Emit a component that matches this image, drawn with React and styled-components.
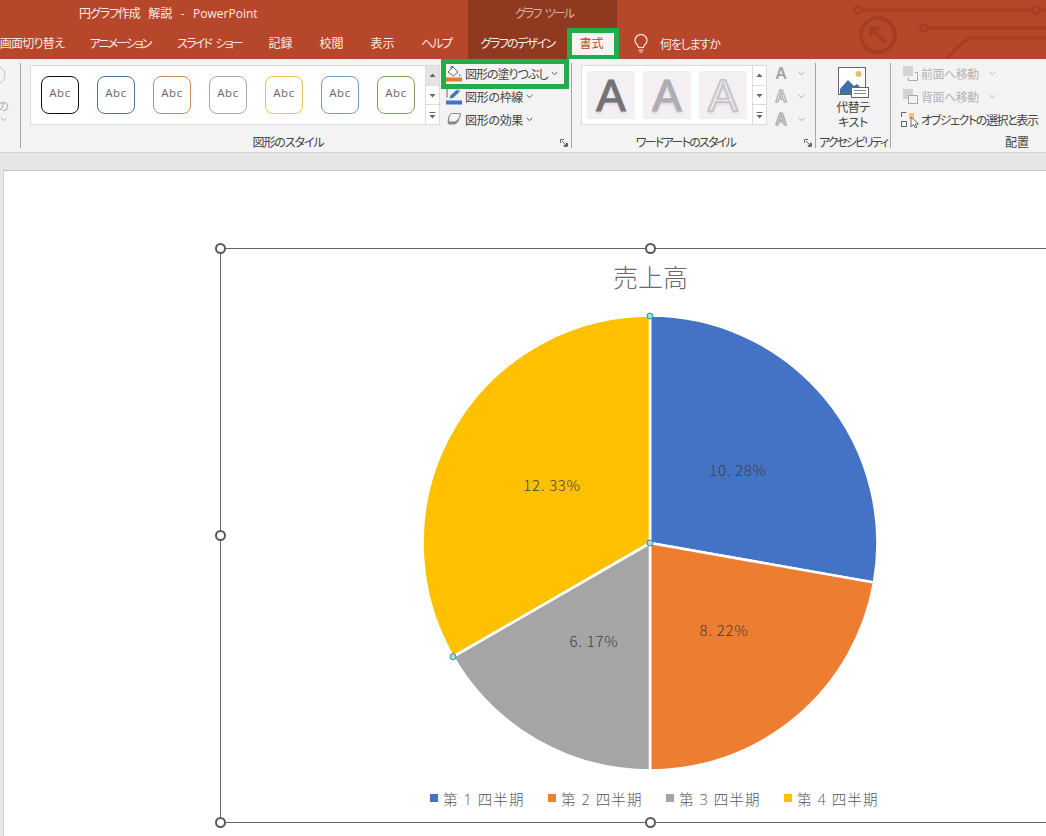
import React from 'react';
import styled, { createGlobalStyle } from 'styled-components';

const GlobalStyle = createGlobalStyle`
  html, body {
    margin: 0;
    height: 836px;
    overflow: hidden;
    background: #e6e6e6;
  }
  body {
    font-family: "Open Sans", "Noto Sans CJK JP", sans-serif;
    font-size: 12px;
    font-feature-settings: "palt";
    color: #444;
  }
`;

const Window = styled.div`
  width: 1046px;
  height: 836px;
  display: flex;
  flex-direction: column;
  overflow: hidden;
`;

/* title bar + tabs */
const TitleBar = styled.div`
  position: relative;
  display: flex;
  height: 59px;
  flex: none;
  background: #b7472a;
  color: #f8e9e4;
`;

const Circuit = styled.svg`
  position: absolute;
  right: 0;
  top: 0;
`;

const TitleColumn = styled.div`
  width: 468px;
  flex: none;
`;

const TitleText = styled.div`
  display: flex;
  gap: 8.5px;
  height: 28px;
  line-height: 28px;
  padding-left: 79px;
  white-space: nowrap;
`;

const Tight = styled.span`
  letter-spacing: ${p => p.$ls}px;
`;

const TabRow = styled.div`
  display: flex;
  height: 31px;
  justify-content: ${p => (p.$end ? 'flex-end' : 'flex-start')};
  padding-right: ${p => (p.$end ? '3px' : '0')};
`;

const Tab = styled.div`
  flex: none;
  width: ${p => p.$w}px;
  line-height: 31px;
  text-align: center;
  white-space: nowrap;
  letter-spacing: ${p => p.$ls || 0}px;
  word-spacing: ${p => p.$ws || 0}px;
`;

const ActiveTab = styled.div`
  position: relative;
  z-index: 1;
  flex: none;
  width: 52px;
  box-sizing: border-box;
  padding-right: 3px;
  border: 5px solid #22ac4c;
  border-bottom-width: 4px;
  background: #f6f3f2;
  color: #b7472a;
  line-height: 22px;
  text-align: center;
`;

const ContextColumn = styled.div`
  width: 149px;
  flex: none;
  background: #8f3a20;
`;

const ContextLabel = styled.div`
  height: 28px;
  padding-left: 3px;
  line-height: 27px;
  text-align: center;
  letter-spacing: -1.9px;
  word-spacing: 3px;
  color: #dcae9d;
`;

const TellMe = styled.div`
  display: flex;
  align-items: center;
  gap: 12px;
  margin-top: 28px;
  height: 31px;
  padding-left: 17px;
  letter-spacing: -1.2px;
`;

/* ribbon */
const Ribbon = styled.div`
  display: flex;
  flex: none;
  height: 89px;
  padding-top: 4px;
  background: #f3f3f3;
  border-bottom: 1px solid #d2d2d2;
`;

const Group = styled.div`
  display: flex;
  flex-direction: column;
  flex: none;
  box-sizing: border-box;
  width: ${p => p.$w}px;
  height: 85px;
  border-right: ${p => (p.$last ? 'none' : '1px solid #a6a6a6')};
`;

const GroupBody = styled.div`
  display: flex;
  flex: 1;
  min-height: 0;
  padding-left: ${p => p.$pad || 0}px;
`;

const GroupFooter = styled.div`
  display: flex;
  align-items: center;
  height: 14px;
  margin-bottom: -2px;
  line-height: 14px;
`;

const GroupLabel = styled.div`
  flex: 1;
  text-align: ${p => p.$align || 'center'};
  padding-right: ${p => p.$pr || 0}px;
  white-space: nowrap;
  letter-spacing: ${p => p.$ls || 0}px;
`;

const Launcher = styled.svg`
  flex: none;
  margin-right: 3px;
`;

const CutOffGroup = styled.div`
  display: flex;
  flex-direction: column;
  align-items: center;
  width: 10px;
  margin-left: -2px;
  padding-top: 2px;
  color: #b0b0b0;
  font-size: 12px;
  line-height: 14px;
`;

const CutOffGlyph = styled.span`
  margin: 15px 0 3px;
`;

const Gallery = styled.div`
  display: flex;
  flex: none;
  align-items: center;
  justify-content: space-between;
  box-sizing: border-box;
  width: ${p => p.$w}px;
  height: 60px;
  margin-top: 2px;
  padding-left: ${p => p.$pad}px;
  background: #fff;
  border: 1px solid #dcdcdc;
  border-right: none;
`;

const ThumbRow = styled.div`
  display: flex;
  gap: ${p => p.$gap}px;
`;

const StyleThumb = styled.div`
  flex: none;
  box-sizing: border-box;
  width: 38px;
  height: 38px;
  padding-top: 8px;
  border: 1.2px solid ${p => p.$color};
  border-radius: 8px;
  font-family: "Open Sans", sans-serif;
  font-size: 11.5px;
  line-height: 16px;
  letter-spacing: 0.5px;
  text-align: center;
  color: #666;
`;

const ArtThumb = styled.div`
  flex: none;
  width: 48px;
  height: 48px;
  background: #f3eff3;
  font-family: "Liberation Sans", sans-serif;
  font-size: 44px;
  line-height: 49px;
  text-align: center;
  color: ${p => p.$fill};
  -webkit-text-stroke: ${p => (p.$outline ? '2px #c8c4ca' : `1.2px ${p.$fill}`)};
  text-shadow: 0 2px 3px rgba(120, 120, 120, 0.25);
`;

const Spinner = styled.div`
  display: flex;
  flex-direction: column;
  flex: none;
  box-sizing: border-box;
  width: 15px;
  height: 60px;
  border: 1px solid #dcdcdc;
  background: #fff;
`;

const SpinCell = styled.div`
  display: flex;
  flex: 1;
  align-items: center;
  justify-content: center;
  background: ${p => (p.$off ? '#e4e4e4' : 'transparent')};
  & + & {
    border-top: 1px solid #dcdcdc;
  }
`;

const CommandList = styled.div`
  display: flex;
  flex-direction: column;
  margin-top: -1px;
  margin-left: ${p => p.$ml || 0}px;
`;

const Command = styled.div`
  position: relative;
  display: flex;
  align-items: center;
  height: 23px;
  gap: ${p => p.$gap ?? 3}px;
  padding-left: ${p => p.$pl ?? 3}px;
  white-space: nowrap;
  color: ${p => (p.$off ? '#b4b4b4' : '#444')};
`;

const CommandText = styled.span`
  letter-spacing: ${p => p.$ls || 0}px;
`;

const ChevronSlot = styled.span`
  display: flex;
  margin-left: ${p => p.$ml || 0}px;
`;

const Callout = styled.div`
  position: absolute;
  left: -2px;
  top: -3px;
  width: 128px;
  height: 30px;
  box-sizing: border-box;
  border: 5px solid #22ac4c;
  pointer-events: none;
`;

const TextStyleList = styled.div`
  display: flex;
  flex-direction: column;
  margin-left: 6px;
  margin-top: -1px;
`;

const TextStyleRow = styled.div`
  display: flex;
  align-items: center;
  gap: 7px;
  height: 23px;
  padding-left: 2px;
`;

const SmallA = styled.span`
  width: 12px;
  font-family: "Liberation Sans", sans-serif;
  font-size: 16px;
  font-weight: 700;
  text-align: center;
  color: ${p => p.$fill};
  -webkit-text-stroke: ${p => (p.$outline ? '1px #a8a8a8' : '0')};
`;

const AltButton = styled.div`
  display: flex;
  flex: 1;
  flex-direction: column;
  align-items: center;
  padding-top: 4px;
  line-height: 14.5px;
  text-align: center;
`;

const AltLabel = styled.div`
  margin-top: 3px;
  letter-spacing: -0.5px;
`;

/* slide area */
const Workspace = styled.div`
  flex: 1;
  min-height: 0;
  padding: 17px 0 0 3px;
  background: #e6e6e6;
`;

const Slide = styled.div`
  height: 100%;
  box-sizing: border-box;
  padding: 77px 0 0 216px;
  background: #fff;
  border-top: 1px solid #c4c4c4;
  border-left: 1px solid #d0d0d0;
`;

const ChartFrame = styled.div`
  position: relative;
  display: flex;
  flex-direction: column;
  align-items: center;
  box-sizing: border-box;
  width: 860px;
  height: 575px;
  border: 1px solid #666;
  border-right: none;
`;

const Handle = styled.div`
  position: absolute;
  left: ${p => p.$x}px;
  top: ${p => p.$y}px;
  width: 11px;
  height: 11px;
  box-sizing: border-box;
  border: 2px solid #595959;
  border-radius: 50%;
  background: #fff;
`;

const ChartTitle = styled.div`
  margin-top: 11px;
  height: 34px;
  font-size: 25px;
  line-height: 34px;
  color: #6a6a6a;
  font-weight: 300;
`;

const Pie = styled.svg`
  display: block;
  flex: none;
  margin-top: 21px;
  margin-left: -1px;
  overflow: visible;
`;

const PieLabel = styled.text`
  font-family: "Noto Sans CJK JP", sans-serif;
  font-size: 15px;
  font-weight: 300;
  fill: #404040;
  text-anchor: middle;
  dominant-baseline: central;
  letter-spacing: 0.7px;
`;

const Legend = styled.div`
  display: flex;
  gap: 23px;
  margin-top: 18px;
  margin-left: 8px;
`;

const LegendItem = styled.div`
  display: flex;
  align-items: center;
  gap: 5px;
  width: 95px;
  height: 18px;
  font-size: 14.5px;
  font-weight: 300;
  letter-spacing: 1.1px;
  white-space: pre;
  color: #595959;
  &::before {
    content: '';
    flex: none;
    width: 8px;
    height: 8px;
    background: ${p => p.$color};
  }
`;

const Chevron = ({ color = '#555', ml }) => (
  <ChevronSlot $ml={ml}>
    <svg width="7" height="5" viewBox="0 0 7 5">
      <path d="M.7 1l2.800 2.600L6.300 1" fill="none" stroke={color} strokeWidth="1" />
    </svg>
  </ChevronSlot>
);

const Caret = ({ kind }) => (
  <svg width="7" height="8" viewBox="0 0 7 8">
    {kind === 'up' && <path d="M.5 6h6L3.500 2.500z" fill="#666" />}
    {kind === 'down' && <path d="M.5 3h6L3.500 6.500z" fill="#666" />}
    {kind === 'more' && <path d="M.5 1h6v1h-6zM.5 4h6L3.500 7.500z" fill="#666" />}
  </svg>
);

const Spin = ({ firstOff }) => (
  <Spinner>
    <SpinCell $off={firstOff}><Caret kind="up" /></SpinCell>
    <SpinCell><Caret kind="down" /></SpinCell>
    <SpinCell><Caret kind="more" /></SpinCell>
  </Spinner>
);

const DialogLauncher = () => (
  <Launcher width="8" height="8" viewBox="0 0 8 8">
    <path d="M.5 4V.5H4M7.500 4v3.500H4M2 2l4.500 4.500M6.500 3.500v3h-3" fill="none" stroke="#666" />
  </Launcher>
);

const BucketIcon = () => (
  <svg width="16" height="17" viewBox="0 0 16 17">
    <path d="M2 7l5-5 5 5-4.500 4z" fill="#fff" stroke="#666" />
    <path d="M5 4V1.500h2V3" fill="none" stroke="#666" />
    <path d="M13.500 8.500c1 1.400 1.400 2 1 2.600-.5.5-1.500.3-1.500-.6z" fill="#888" />
    <rect x="0" y="12.500" width="16" height="4" fill="#e07b39" />
  </svg>
);

const PenIcon = () => (
  <svg width="16" height="17" viewBox="0 0 16 17">
    <path d="M1 .5v9" stroke="#666" fill="none" />
    <path d="M3.500 10.500l1-3L11 1.500l2.500 2.500L7 10z" fill="#3f79b8" />
    <path d="M11 1.500l1.500-1 2.500 2.500-1.500 1z" fill="#9cc2e5" />
    <rect x="0" y="12.500" width="16" height="4" fill="#4472c4" />
  </svg>
);

const EffectIcon = () => (
  <svg width="16" height="15" viewBox="0 0 16 15">
    <path d="M4 2.500h10.500c-.5 4-2 8.500-5.500 10H2.500C1 11 1.500 5 4 2.500z" fill="#8c8c8c" />
    <path d="M5 1.500h9.500c-.5 3.500-2 7-5.500 8.500H3C2 8 3 4 5 1.500z" fill="#f4f4f4" stroke="#777" strokeWidth=".8" />
  </svg>
);

const AltTextIcon = () => (
  <svg width="31" height="31" viewBox="0 0 31 31">
    <rect x=".5" y=".5" width="27" height="27" fill="#fff" stroke="#666" />
    <circle cx="20.500" cy="7" r="3" fill="#e8bd6c" />
    <path d="M2 27V22l8-9 6 6 3-2 7 7v3z" fill="#3f6fa5" />
    <rect x="13.500" y="20.500" width="17" height="10" fill="#fff" stroke="#666" />
    <path d="M16 23.500h12M16 26.500h12" stroke="#888" />
  </svg>
);

const ForwardIcon = ({ back }) => (
  <svg width="15" height="15" viewBox="0 0 15 15">
    <rect x="0" y="0" width="10" height="10" fill="#d4d4d4" />
    {back ? (
      <rect x="5.500" y="6.500" width="9" height="8" fill="#f3f3f3" stroke="#aaa" />
    ) : (
      <path d="M11.500 6.500h3v8h-9v-3" fill="none" stroke="#aaa" />
    )}
  </svg>
);

const SelectionIcon = () => (
  <svg width="18" height="16" viewBox="0 0 18 16">
    <path d="M.5 5V.5h5" fill="none" stroke="#666" />
    <rect x=".5" y="9.500" width="5" height="5" fill="none" stroke="#666" />
    <rect x="8" y="1" width="5" height="6" fill="#f0c090" />
    <path d="M10 5v10l2.500-2.500 2 3.500 1.500-1-2-3h3.500z" fill="#fff" stroke="#666" />
  </svg>
);

const BulbIcon = () => (
  <svg width="14" height="19" viewBox="0 0 14 19">
    <path
      d="M4.500 13.500c0-2.500-3.500-3.500-3.500-7a6 6 0 0 1 12 0c0 3.500-3.500 4.500-3.500 7zM4.500 16h5M5.500 18h3"
      fill="none"
      stroke="#f8e9e4"
      strokeWidth="1.200"
    />
  </svg>
);

const STYLE_BORDERS = ['#111', '#4d7396', '#c98a5c', '#a8a8a8', '#e6c64c', '#6f9cc0', '#77a35c'];

const SLICES = [
  { name: '第 1 四半期', value: 10, label: '10. 28%', color: '#4472c4', lx: 316, ly: 154 },
  { name: '第 2 四半期', value: 8, label: '8. 22%', color: '#ed7d31', lx: 302, ly: 314 },
  { name: '第 3 四半期', value: 6, label: '6. 17%', color: '#a5a5a5', lx: 172, ly: 325 },
  { name: '第 4 四半期', value: 12, label: '12. 33%', color: '#ffc000', lx: 130, ly: 169 },
];

const PIE_C = 228;
const PIE_R = 227.5;
const pointAt = deg => {
  const a = (deg * Math.PI) / 180;
  return [PIE_C + PIE_R * Math.sin(a), PIE_C - PIE_R * Math.cos(a)];
};

const PieChart = () => {
  const total = SLICES.reduce((sum, s) => sum + s.value, 0);
  let start = 0;
  const slices = SLICES.map(s => {
    const end = start + (s.value / total) * 360;
    const [x1, y1] = pointAt(start);
    const [x2, y2] = pointAt(end);
    const large = end - start > 180 ? 1 : 0;
    start = end;
    return { ...s, d: `M${PIE_C} ${PIE_C}L${x1} ${y1}A${PIE_R} ${PIE_R} 0 ${large} 1 ${x2} ${y2}Z` };
  });
  const [gx, gy] = pointAt(240);
  return (
    <Pie width="456" height="456" viewBox="0 0 456 456">
      {slices.map(s => (
        <path key={s.name} d={s.d} fill={s.color} stroke="#fff" strokeWidth="2.6" />
      ))}
      {slices.map(s => (
        <PieLabel key={s.label} x={s.lx} y={s.ly}>{s.label}</PieLabel>
      ))}
      {[[PIE_C, 1], [PIE_C, PIE_C], [gx, gy]].map(([x, y]) => (
        <circle key={`${x}-${y}`} cx={x} cy={y} r="3" fill="#a8dde0" stroke="#2f8ea6" />
      ))}
    </Pie>
  );
};

const App = () => (
  <Window>
    <GlobalStyle />
    <TitleBar>
      <Circuit width="200" height="59" viewBox="0 0 200 59">
        <g fill="none" stroke="#a53f22" strokeWidth="3">
          <circle cx="12" cy="10" r="3.500" />
          <circle cx="190" cy="10" r="3.500" />
          <path d="M15 10h172M193 10h7" />
          <circle cx="32" cy="35" r="17" strokeWidth="4" />
          <path d="M25 28l15 15M25 37v-9h9" strokeWidth="4" />
          <circle cx="78" cy="28" r="3.500" />
          <path d="M82 28h118M100 59l22-21h78" />
        </g>
      </Circuit>
      <TitleColumn>
        <TitleText>
          <Tight $ls={-1.1}>円グラフ作成</Tight>
          <span>解説</span>
          <span>-</span>
          <span>PowerPoint</span>
        </TitleText>
        <TabRow $end>
          <Tab $w={88} $ls={-0.7}>画面切り替え</Tab>
          <Tab $w={88} $ls={-2}>アニメーション</Tab>
          <Tab $w={91} $ls={-1.8} $ws={3}>スライド ショー</Tab>
          <Tab $w={51}>記録</Tab>
          <Tab $w={51}>校閲</Tab>
          <Tab $w={51}>表示</Tab>
          <Tab $w={57} $ls={-1.3}>ヘルプ</Tab>
        </TabRow>
      </TitleColumn>
      <ContextColumn>
        <ContextLabel>グラフ ツール</ContextLabel>
        <TabRow>
          <Tab $w={99} $ls={-1.6}>グラフのデザイン</Tab>
          <ActiveTab>書式</ActiveTab>
        </TabRow>
      </ContextColumn>
      <TellMe>
        <BulbIcon />
        何をしますか
      </TellMe>
    </TitleBar>

    <Ribbon>
      <Group $w={21}>
        <GroupBody>
          <CutOffGroup>
            <svg width="10" height="20" viewBox="0 0 10 20">
              <circle cx="-2" cy="10" r="9" fill="none" stroke="#c6c6c6" />
            </svg>
            <CutOffGlyph>の</CutOffGlyph>
            <Chevron color="#b0b0b0" />
          </CutOffGroup>
        </GroupBody>
      </Group>

      <Group $w={551}>
        <GroupBody $pad={9}>
          <Gallery $w={410} $pad={10}>
            <ThumbRow $gap={18}>
              {STYLE_BORDERS.map(color => (
                <StyleThumb key={color} $color={color}>Abc</StyleThumb>
              ))}
            </ThumbRow>
            <Spin firstOff />
          </Gallery>
          <CommandList $ml={3}>
            <Command>
              <BucketIcon />
              <CommandText $ls={-1}>図形の塗りつぶし</CommandText>
              <Chevron />
              <Callout />
            </Command>
            <Command>
              <PenIcon />
              <CommandText $ls={-0.3}>図形の枠線</CommandText>
              <Chevron />
            </Command>
            <Command>
              <EffectIcon />
              <CommandText $ls={-0.3}>図形の効果</CommandText>
              <Chevron />
            </Command>
          </CommandList>
        </GroupBody>
        <GroupFooter>
          <GroupLabel $pr={5} $ls={-1.1}>図形のスタイル</GroupLabel>
          <DialogLauncher />
        </GroupFooter>
      </Group>

      <Group $w={244}>
        <GroupBody $pad={9}>
          <Gallery $w={186} $pad={5}>
            <ThumbRow $gap={8}>
              <ArtThumb $fill="#737377">A</ArtThumb>
              <ArtThumb $fill="#adadb2">A</ArtThumb>
              <ArtThumb $fill="#ececf0" $outline>A</ArtThumb>
            </ThumbRow>
            <Spin />
          </Gallery>
          <TextStyleList>
            <TextStyleRow>
              <SmallA $fill="#a4a4a4">A</SmallA>
              <Chevron color="#aaa" ml={4} />
            </TextStyleRow>
            <TextStyleRow>
              <SmallA $fill="#f0f0f0" $outline>A</SmallA>
              <Chevron color="#aaa" ml={4} />
            </TextStyleRow>
            <TextStyleRow>
              <SmallA $fill="#d4d4d4" $outline>A</SmallA>
              <Chevron color="#aaa" ml={4} />
            </TextStyleRow>
          </TextStyleList>
        </GroupBody>
        <GroupFooter>
          <GroupLabel $pr={5} $ls={-1.7}>ワードアートのスタイル</GroupLabel>
          <DialogLauncher />
        </GroupFooter>
      </Group>

      <Group $w={75}>
        <GroupBody>
          <AltButton>
            <AltTextIcon />
            <AltLabel>代替テ<br />キスト</AltLabel>
          </AltButton>
        </GroupBody>
        <GroupFooter>
          <GroupLabel $ls={-2}>アクセシビリティ</GroupLabel>
        </GroupFooter>
      </Group>

      <Group $w={155} $last>
        <GroupBody $pad={8}>
          <CommandList>
            <Command $off $pl={4}>
              <ForwardIcon />
              <CommandText $ls={-0.5}>前面へ移動</CommandText>
              <Chevron color="#bbb" ml={7} />
            </Command>
            <Command $off $pl={4}>
              <ForwardIcon back />
              <CommandText $ls={-0.5}>背面へ移動</CommandText>
              <Chevron color="#bbb" ml={7} />
            </Command>
            <Command $pl={2} $gap={2}>
              <SelectionIcon />
              <CommandText $ls={-1.4}>オブジェクトの選択と表示</CommandText>
            </Command>
          </CommandList>
        </GroupBody>
        <GroupFooter>
          <GroupLabel $align="right" $pr={17}>配置</GroupLabel>
        </GroupFooter>
      </Group>
    </Ribbon>

    <Workspace>
      <Slide>
        <ChartFrame>
          <Handle $x={-6} $y={-6} />
          <Handle $x={424} $y={-6} />
          <Handle $x={-6} $y={281} />
          <Handle $x={-6} $y={568} />
          <Handle $x={424} $y={568} />
          <ChartTitle>売上高</ChartTitle>
          <PieChart />
          <Legend>
            {SLICES.map(s => (
              <LegendItem key={s.name} $color={s.color}>{s.name}</LegendItem>
            ))}
          </Legend>
        </ChartFrame>
      </Slide>
    </Workspace>
  </Window>
);

export default App;
